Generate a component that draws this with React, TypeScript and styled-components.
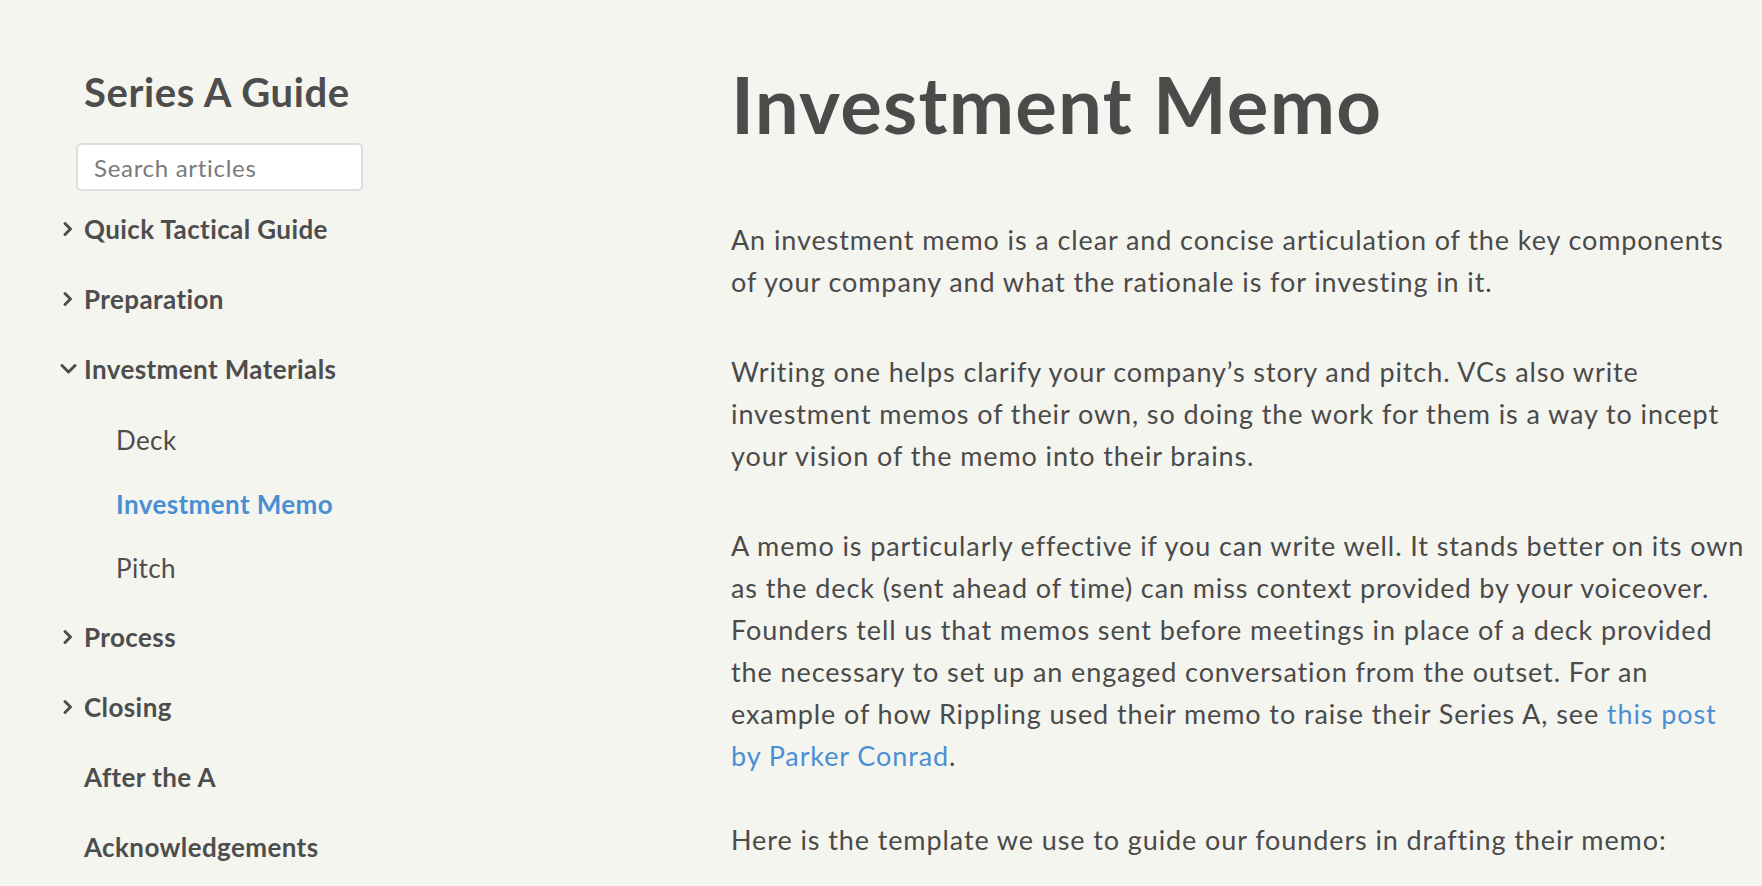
import React from "react";
import styled, { createGlobalStyle } from "styled-components";

const GlobalStyle = createGlobalStyle`
  html, body {
    margin: 0;
    padding: 0;
    background: #f5f5f0;
  }
  body {
    font-family: Lato, "Open Sans", "Liberation Sans", sans-serif;
    color: #4a4a4a;
    -webkit-font-smoothing: antialiased;
  }
  * { box-sizing: border-box; }
`;

const Page = styled.div`
  display: flex;
  align-items: flex-start;
  min-height: 886px;
  overflow: hidden;
`;

const Sidebar = styled.aside`
  width: 731px;
  flex-shrink: 0;
  padding: 57px 0 0 56px;
  display: flex;
  flex-direction: column;
`;

const GuideTitle = styled.h2`
  margin: 0 0 0 28px;
  font-size: 40px;
  line-height: 48px;
  font-weight: 700;
  letter-spacing: 0.6px;
  color: #4d4d4d;
  padding-top: 11px;
`;

const SearchInput = styled.input`
  margin: 27px 0 0 20px;
  width: 287px;
  height: 48px;
  border: 2px solid #dedede;
  border-radius: 5px;
  background: #ffffff;
  padding: 0 16px;
  font-family: Lato, "Open Sans", sans-serif;
  font-size: 24px;
  letter-spacing: 0.7px;
  color: #4a4a4a;
  outline: none;
  &::placeholder {
    color: #7a7a7a;
  }
`;

const NavList = styled.nav`
  margin-top: 3px;
  display: flex;
  flex-direction: column;
`;

const TopItem = styled.a`
  display: flex;
  align-items: center;
  height: 70px;
  font-size: 26px;
  letter-spacing: 0.4px;
  font-weight: 700;
  color: #4d4d4d;
  text-decoration: none;
  cursor: pointer;
`;

const Chevron = styled.span`
  width: 24px;
  margin-right: 4px;
  display: flex;
  align-items: center;
  justify-content: center;
`;

const SubList = styled.div`
  display: flex;
  flex-direction: column;
  padding: 4px 0 2px 60px;
`;

const SubItem = styled.a<{ $active?: boolean }>`
  display: flex;
  align-items: center;
  height: 64px;
  font-size: 26px;
  letter-spacing: 0.4px;
  font-weight: ${(p) => (p.$active ? 700 : 400)};
  color: ${(p) => (p.$active ? "#4a8fd4" : "#4d4d4d")};
  text-decoration: none;
  cursor: pointer;
`;

const Main = styled.main`
  width: 1014px;
  flex-shrink: 0;
  padding-top: 57px;
`;

const Title = styled.h1`
  margin: 0;
  font-size: 78px;
  line-height: 94px;
  font-weight: 700;
  color: #4b4b4b;
  letter-spacing: 1.2px;
`;

const Article = styled.article`
  margin-top: 68px;
  display: flex;
  flex-direction: column;
  gap: 48px;
`;

const Para = styled.p<{ $pull?: number }>`
  margin: ${(p) => (p.$pull ? `-${p.$pull}px 0 0` : "0")};
  font-size: 27px;
  line-height: 42px;
  letter-spacing: 0.9px;
  font-weight: 400;
  color: #4a4a4a;
`;

const Line = styled.span`
  display: block;
  white-space: nowrap;
`;

const Link = styled.a`
  color: #4a8fd4;
  text-decoration: none;
`;

const RightChevron = () => (
  <svg width="12" height="16" viewBox="0 0 12 16" fill="none">
    <polyline points="3,2.5 8.5,8 3,13.5" stroke="#4d4d4d" strokeWidth="3" strokeLinecap="round" strokeLinejoin="round" />
  </svg>
);

const DownChevron = () => (
  <svg width="17" height="12" viewBox="0 0 17 12" fill="none">
    <polyline points="2,2.5 8.5,9 15,2.5" stroke="#4d4d4d" strokeWidth="3" strokeLinecap="round" strokeLinejoin="round" />
  </svg>
);

type Top = { label: string; icon?: "right" | "down" };

const beforeItems: Top[] = [
  { label: "Quick Tactical Guide", icon: "right" },
  { label: "Preparation", icon: "right" },
  { label: "Investment Materials", icon: "down" },
];

const afterItems: Top[] = [
  { label: "Process", icon: "right" },
  { label: "Closing", icon: "right" },
  { label: "After the A" },
  { label: "Acknowledgements" },
];

const subItems = [
  { label: "Deck" },
  { label: "Investment Memo", active: true },
  { label: "Pitch" },
];

const renderTop = (t: Top) => (
  <TopItem key={t.label}>
    <Chevron>
      {t.icon === "right" && <RightChevron />}
      {t.icon === "down" && <DownChevron />}
    </Chevron>
    {t.label}
  </TopItem>
);

const p1 = [
  "An investment memo is a clear and concise articulation of the key components",
  "of your company and what the rationale is for investing in it.",
];

const p2 = [
  "Writing one helps clarify your company’s story and pitch. VCs also write",
  "investment memos of their own, so doing the work for them is a way to incept",
  "your vision of the memo into their brains.",
];

const p3 = [
  "A memo is particularly effective if you can write well. It stands better on its own",
  "as the deck (sent ahead of time) can miss context provided by your voiceover.",
  "Founders tell us that memos sent before meetings in place of a deck provided",
  "the necessary to set up an engaged conversation from the outset. For an",
];

export default function App() {
  return (
    <>
      <GlobalStyle />
      <Page>
        <Sidebar>
          <GuideTitle>Series A Guide</GuideTitle>
          <SearchInput placeholder="Search articles" />
          <NavList>
            {beforeItems.map(renderTop)}
            <SubList>
              {subItems.map((s) => (
                <SubItem key={s.label} $active={s.active}>
                  {s.label}
                </SubItem>
              ))}
            </SubList>
            {afterItems.map(renderTop)}
          </NavList>
        </Sidebar>
        <Main>
          <Title>Investment Memo</Title>
          <Article>
            <Para>
              {p1.map((l) => (
                <Line key={l}>{l}</Line>
              ))}
            </Para>
            <Para>
              {p2.map((l) => (
                <Line key={l}>{l}</Line>
              ))}
            </Para>
            <Para>
              {p3.map((l) => (
                <Line key={l}>{l}</Line>
              ))}
              <Line>
                example of how Rippling used their memo to raise their Series A, see <Link href="#">this post</Link>
              </Line>
              <Line>
                <Link href="#">by Parker Conrad</Link>.
              </Line>
            </Para>
            <Para $pull={6}>
              <Line>Here is the template we use to guide our founders in drafting their memo:</Line>
            </Para>
          </Article>
        </Main>
      </Page>
    </>
  );
}
